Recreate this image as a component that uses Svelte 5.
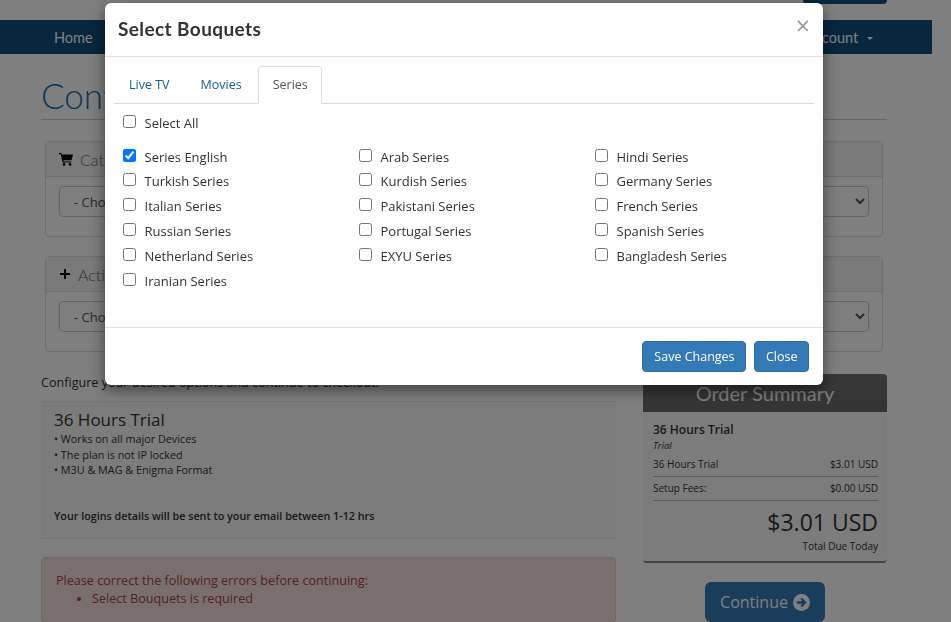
<script>
  const tabs = ['Live TV', 'Movies', 'Series']
  const series = [
    'Series English', 'Arab Series', 'Hindi Series',
    'Turkish Series', 'Kurdish Series', 'Germany Series',
    'Italian Series', 'Pakistani Series', 'French Series',
    'Russian Series', 'Portugal Series', 'Spanish Series',
    'Netherland Series', 'EXYU Series', 'Bangladesh Series',
    'Iranian Series'
  ]
  let active = $state('Series')
</script>

<div class="page">
  <div class="topbar"><div class="account-btn"></div></div>
  <nav>
    <a href="#home">Home</a>
    <a href="#account" class="account">Account <span class="caret"></span></a>
  </nav>

  <main>
    <h1>Configure</h1>

    <section class="panel">
      <div class="panel-head">
        <svg width="14" height="14" viewBox="0 0 14 14"><path fill="#000" d="M0 1h2.4l.5 1.6H14l-1.5 5.6H4.4l.3 1.2h7.6v1.2H3.6L1.6 2.2H0z"/><circle cx="5" cy="12.4" r="1.3"/><circle cx="11" cy="12.4" r="1.3"/></svg>
        Categories
      </div>
      <div class="panel-body">
        <select><option>- Choose a Category -</option></select>
      </div>
    </section>

    <section class="panel">
      <div class="panel-head">
        <svg width="12" height="12" viewBox="0 0 12 12"><path fill="#000" d="M5 1h2v4h4v2H7v4H5V7H1V5h4z"/></svg>
        Actions
      </div>
      <div class="panel-body">
        <select><option>- Choose an Action -</option></select>
      </div>
    </section>

    <div class="columns">
      <div class="left">
        <p class="intro">Configure your desired options and continue to checkout.</p>
        <div class="plan">
          <h3>36 Hours Trial</h3>
          <ul>
            <li>• Works on all major Devices</li>
            <li>• The plan is not IP locked</li>
            <li>• M3U &amp; MAG &amp; Enigma Format</li>
          </ul>
          <strong>Your logins details will be sent to your email between 1-12 hrs</strong>
        </div>
        <div class="alert">
          Please correct the following errors before continuing:
          <ul><li>Select Bouquets is required</li></ul>
        </div>
      </div>

      <aside>
        <div class="summary">
          <div class="summary-head">Order Summary</div>
          <div class="summary-body">
            <div class="product">36 Hours Trial</div>
            <div class="group">Trial</div>
            <div class="line"><span>36 Hours Trial</span><span>$3.01 USD</span></div>
            <div class="line"><span>Setup Fees:</span><span>$0.00 USD</span></div>
            <div class="total">$3.01 USD</div>
            <div class="due">Total Due Today</div>
          </div>
        </div>
        <button class="continue">
          Continue
          <svg width="17" height="17" viewBox="0 0 18 18"><circle cx="9" cy="9" r="9" fill="#fff"/><path fill="none" stroke="#337ab7" stroke-width="2.4" d="M4 9h8.5M8.6 4.8 12.8 9l-4.2 4.2"/></svg>
        </button>
      </aside>
    </div>
  </main>
</div>

<div class="backdrop"></div>

<div class="modal">
  <header>
    <h4>Select Bouquets</h4>
    <span class="close">×</span>
  </header>
  <div class="modal-body">
    <ul class="tabs">
      {#each tabs as tab}
        <li>
          <button class:active={active === tab} onclick={() => (active = tab)}>{tab}</button>
        </li>
      {/each}
    </ul>
    <label class="select-all"><input type="checkbox" /> Select All</label>
    <div class="grid">
      {#each series as name, i}
        <label><input type="checkbox" checked={i === 0} /> {name}</label>
      {/each}
    </div>
  </div>
  <footer>
    <button class="btn">Save Changes</button>
    <button class="btn">Close</button>
  </footer>
</div>

<style>
  :global(body) {
    background: #fff;
    color: #333;
    font-family: 'Open Sans', sans-serif;
    font-size: 13px;
    height: 622px;
    overflow: hidden;
  }
  .page {
    height: 622px;
    overflow: hidden;
    width: 932px;
  }
  .topbar {
    display: flex;
    height: 20px;
    justify-content: flex-end;
    padding-right: 45px;
  }
  .account-btn {
    background: #0c4f7a;
    border-radius: 0 0 4px 4px;
    height: 4px;
    width: 84px;
  }
  nav {
    align-items: center;
    background: #0c4f7a;
    display: flex;
    font-family: Lato, sans-serif;
    font-size: 14.5px;
    height: 34px;
    justify-content: space-between;
    padding: 0 59px 0 54px;
  }
  nav a {
    color: #fff;
    text-decoration: none;
  }
  .caret {
    border-left: 3px solid transparent;
    border-right: 3px solid transparent;
    border-top: 3px solid #fff;
    display: inline-block;
    margin-left: 5px;
    vertical-align: middle;
  }
  main {
    margin-left: 41px;
    width: 846px;
  }
  h1 {
    border-bottom: 1px solid #ccc;
    color: #1a6fa8;
    font-family: Lato, sans-serif;
    font-size: 35px;
    font-weight: 300;
    height: 65px;
    line-height: 82px;
    margin: 0 0 21px;
  }
  .panel {
    background: #fff;
    border: 1px solid #ddd;
    border-radius: 4px;
    height: 96px;
    margin: 0 4px 19px;
    box-sizing: border-box;
  }
  .panel-head {
    align-items: center;
    background: #f5f5f5;
    border-bottom: 1px solid #ddd;
    color: #666;
    display: flex;
    font-family: Lato, sans-serif;
    font-size: 16px;
    font-weight: 300;
    gap: 7px;
    height: 34px;
    padding-left: 13px;
  }
  .panel-body {
    padding: 9px 13px;
  }
  .panel-body select {
    background: #fff;
    border: 1px solid #ccc;
    border-radius: 4px;
    color: #555;
    font-family: inherit;
    font-size: 13px;
    height: 31px;
    padding: 0 10px;
    width: 100%;
  }
  .columns {
    display: flex;
    gap: 27px;
    margin-top: 22px;
  }
  .left {
    width: 575px;
  }
  .intro {
    border-bottom: 1px solid #eee;
    font-size: 12.6px;
    margin: 0;
    line-height: 18px;
    padding: 0 0 9px;
  }
  .plan {
    background: #f8f8f8;
    border-bottom: 1px solid #eee;
    box-sizing: border-box;
    height: 137px;
    padding: 6px 13px;
  }
  .plan h3 {
    font-size: 17px;
    font-weight: 400;
    line-height: 23px;
    margin: 0;
  }
  .plan ul {
    font-size: 10.8px;
    line-height: 15.5px;
    list-style: none;
    margin: 0 0 28px;
    padding: 0;
  }
  .plan strong {
    font-size: 10.75px;
    font-weight: 600;
  }
  .alert {
    background: #f2dede;
    border: 1px solid #ebccd1;
    border-radius: 4px;
    color: #a94442;
    font-size: 12.6px;
    line-height: 18px;
    margin-top: 18px;
    padding: 14px 14px;
  }
  .alert ul {
    margin: 0;
    padding-left: 36px;
  }
  aside {
    width: 244px;
  }
  .summary {
    margin-bottom: 19px;
  }
  .summary-head {
    background: linear-gradient(#707070, #6a6a6a);
    border-radius: 4px 4px 0 0;
    color: #fff;
    font-family: Lato, sans-serif;
    font-size: 20px;
    height: 38px;
    line-height: 38px;
    text-align: center;
  }
  .summary-body {
    background: #f8f8f8;
    border-bottom: 2px solid #888;
    border-radius: 4px;
    box-sizing: border-box;
    height: 151px;
    padding: 9px 9px 0 10px;
  }
  .product {
    font-size: 12px;
    font-weight: 600;
    line-height: 17px;
  }
  .group {
    font-size: 9.5px;
    font-style: italic;
    line-height: 14px;
    margin-top: 0.5px;
  }
  .line {
    border-bottom: 1px solid #bbb;
    display: flex;
    font-size: 10px;
    justify-content: space-between;
    line-height: 14px;
    padding: 4.5px 0;
  }
  .total {
    font-size: 23px;
    line-height: 30px;
    margin-top: 6px;
    text-align: right;
  }
  .due {
    font-size: 10px;
    margin-top: 2px;
    text-align: right;
  }
  .continue {
    align-items: center;
    background: #337ab7;
    border: 0;
    border-radius: 6px;
    color: #fff;
    display: flex;
    font-family: 'Open Sans', sans-serif;
    font-size: 16px;
    gap: 5px;
    height: 40px;
    justify-content: center;
    margin-left: 62px;
    padding: 0;
    width: 120px;
  }
  .backdrop {
    background: rgba(0, 0, 0, 0.5);
    inset: 0;
    position: fixed;
  }
  .modal {
    background: #fff;
    border-radius: 6px;
    box-shadow: 0 5px 15px rgba(0, 0, 0, 0.5);
    left: 105px;
    position: absolute;
    top: 3px;
    width: 718px;
  }
  header {
    align-items: flex-start;
    border-bottom: 1px solid #e5e5e5;
    display: flex;
    height: 53px;
    justify-content: space-between;
    padding: 0 13px;
  }
  h4 {
    font-family: Lato, sans-serif;
    font-size: 19px;
    font-weight: 700;
    letter-spacing: 0.4px;
    line-height: 51px;
    margin: 0;
  }
  .close {
    color: #999;
    font-family: 'Open Sans', sans-serif;
    font-size: 25px;
    line-height: 44px;
  }
  .modal-body {
    box-sizing: border-box;
    height: 270px;
    padding: 9px 9px 0;
  }
  .tabs {
    border-bottom: 1px solid #ddd;
    display: flex;
    gap: 1px;
    height: 37px;
    list-style: none;
    margin: 0;
    padding: 0;
  }
  .tabs button {
    background: none;
    border: 1px solid transparent;
    color: #125f91;
    font-family: 'Open Sans', sans-serif;
    font-size: 12.5px;
    height: 38px;
    padding: 0 14px 2px;
  }
  .tabs button.active {
    background: #fff;
    border-color: #ddd #ddd #fff;
    border-radius: 4px 4px 0 0;
    color: #555;
    padding: 0 13.5px 2px 14px;
  }
  label {
    align-items: center;
    display: flex;
    height: 25px;
    padding-left: 9px;
  }
  label input {
    margin: 0 8.5px 2px 0;
  }
  .select-all {
    margin-top: 6px;
  }
  .grid {
    display: grid;
    grid-template-columns: repeat(3, 236px);
    grid-template-rows: 24px repeat(5, 25px);
    margin-top: 9px;
  }
  footer {
    border-top: 1px solid #e5e5e5;
    display: flex;
    gap: 8px;
    justify-content: flex-end;
    padding: 13px 14px;
  }
  .btn {
    background: #337ab7;
    border: 1px solid #2e6da4;
    border-radius: 4px;
    color: #fff;
    font-family: 'Open Sans', sans-serif;
    font-size: 12.5px;
    height: 31px;
    padding: 0 10.5px;
  }
  .btn:first-child {
    min-width: 104px;
  }
</style>
